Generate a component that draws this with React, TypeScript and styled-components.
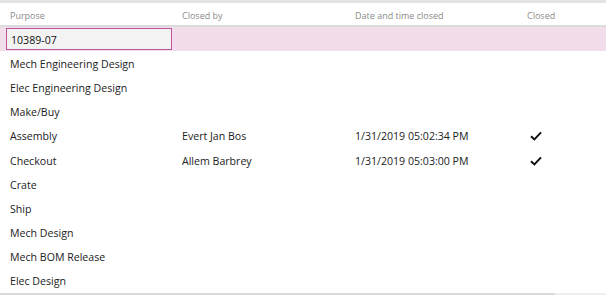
import React from 'react';
import styled, { createGlobalStyle } from 'styled-components';

const GlobalStyle = createGlobalStyle`
  html, body {
    margin: 0;
    padding: 0;
    background: #fff;
  }
  body {
    font-family: 'Open Sans', 'Noto Sans', 'Liberation Sans', sans-serif;
  }
`;

const Panel = styled.div`
  width: 606px;
  height: 295px;
  overflow: hidden;
  background: #fff;
  border-top: 3px solid #e3e3e3;
  box-sizing: border-box;
  display: flex;
  flex-direction: column;
`;

const cols = '172px 173px 172px 1fr';

const HeaderRow = styled.div`
  display: grid;
  grid-template-columns: ${cols};
  height: 24px;
  padding-top: 2px;
  box-sizing: border-box;
  align-items: center;
  border-bottom: 2px solid #dcdcdc;
  flex-shrink: 0;
`;

const HeaderCell = styled.div`
  padding-left: 10px;
  font-size: 9px;
  color: #8a8a8a;
`;

const Body = styled.div`
  flex: 1;
  display: flex;
  flex-direction: column;
`;

const Row = styled.div<{ $selected?: boolean }>`
  display: grid;
  grid-template-columns: ${cols};
  height: 24.1px;
  flex-shrink: 0;
  align-items: center;
  padding-top: 2px;
  box-sizing: border-box;
  background: ${(p) => (p.$selected ? '#f2deea' : 'transparent')};
`;

const Cell = styled.div`
  padding-left: 10px;
  font-size: 10.6px;
  color: #222;
  white-space: nowrap;
`;

const EditBox = styled.div`
  margin-left: 6px;
  margin-top: -2px;
  height: 22px;
  box-sizing: border-box;
  border: 1px solid #c2539a;
  background: #f3f3f3;
  padding: 2px 0 0 4px;
  display: flex;
  align-items: center;
  font-size: 10.6px;
  color: #111;
`;

const CheckCell = styled(Cell)`
  padding-left: 13px;
  display: flex;
  align-items: center;
`;

const Footer = styled.div`
  margin-top: auto;
  height: 2px;
  flex-shrink: 0;
  display: flex;
`;

const FooterTrack = styled.div`
  flex: 1;
  background: #d9d9d9;
`;

const FooterEnd = styled.div`
  width: 51px;
  background: #efefef;
`;

type Step = {
  purpose: string;
  closedBy?: string;
  closedAt?: string;
  closed?: boolean;
};

const steps: Step[] = [
  { purpose: 'Mech Engineering Design' },
  { purpose: 'Elec Engineering Design' },
  { purpose: 'Make/Buy' },
  { purpose: 'Assembly', closedBy: 'Evert Jan Bos', closedAt: '1/31/2019 05:02:34 PM', closed: true },
  { purpose: 'Checkout', closedBy: 'Allem Barbrey', closedAt: '1/31/2019 05:03:00 PM', closed: true },
  { purpose: 'Crate' },
  { purpose: 'Ship' },
  { purpose: 'Mech Design' },
  { purpose: 'Mech BOM Release' },
  { purpose: 'Elec Design' },
];

const Check = () => (
  <svg width="12" height="10" viewBox="0 0 12 10">
    <path d="M1 5.2 L4.4 8.4 L11 1.4" fill="none" stroke="#111" strokeWidth="2" />
  </svg>
);

export default function App() {
  return (
    <>
      <GlobalStyle />
      <Panel>
        <HeaderRow>
          <HeaderCell>Purpose</HeaderCell>
          <HeaderCell>Closed by</HeaderCell>
          <HeaderCell>Date and time closed</HeaderCell>
          <HeaderCell>Closed</HeaderCell>
        </HeaderRow>
        <Body>
          <Row $selected>
            <EditBox>10389-07</EditBox>
            <Cell />
            <Cell />
            <Cell />
          </Row>
          {steps.map((s) => (
            <Row key={s.purpose}>
              <Cell>{s.purpose}</Cell>
              <Cell>{s.closedBy}</Cell>
              <Cell>{s.closedAt}</Cell>
              <CheckCell>{s.closed && <Check />}</CheckCell>
            </Row>
          ))}
          <Footer>
            <FooterTrack />
            <FooterEnd />
          </Footer>
        </Body>
      </Panel>
    </>
  );
}
